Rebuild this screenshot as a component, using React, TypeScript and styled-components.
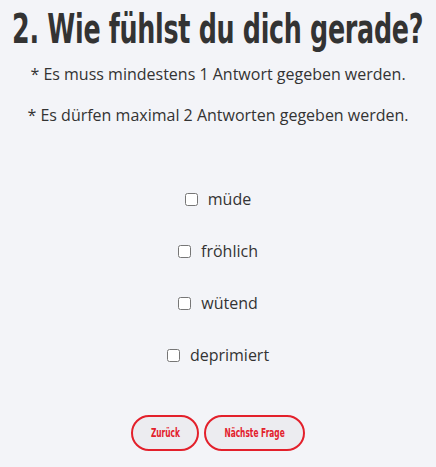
import styled, { createGlobalStyle } from "styled-components";

const Global = createGlobalStyle`
  html, body {
    margin: 0;
    padding: 0;
    background: #f3f4f8;
  }
  body {
    font-family: "Open Sans", "Liberation Sans", sans-serif;
    color: #333;
  }
`;

const Page = styled.div`
  width: 436px;
  height: 467px;
  overflow: hidden;
  display: flex;
  flex-direction: column;
  align-items: center;
`;

const Title = styled.h1`
  margin: 5px 0 0;
  font-family: "DejaVu Sans", sans-serif;
  font-weight: 700;
  font-size: 40px;
  line-height: 48px;
  letter-spacing: -0.5px;
  color: #333;
  white-space: nowrap;
  transform: scaleX(0.635);
`;

const Note = styled.p`
  margin: ${(p: { $top: number }) => p.$top}px 0 0;
  font-size: 16px;
  line-height: 22px;
  color: #333;
`;

const Options = styled.div`
  margin-top: 62px;
  display: flex;
  flex-direction: column;
  align-items: center;
  gap: 30px;
`;

const Option = styled.label`
  display: flex;
  align-items: center;
  gap: 10px;
  font-size: 16px;
  line-height: 22px;
  color: #333;
`;

const Box = styled.input`
  margin: 0;
  width: 13px;
  height: 13px;
`;

const Buttons = styled.div`
  margin-top: 49px;
  display: flex;
  gap: 5px;
`;

const Button = styled.button<{ $w: number }>`
  width: ${(p) => p.$w}px;
  height: 36px;
  padding: 0;
  border: 2px solid #e3202b;
  border-radius: 18px;
  background: #ececf0;
  color: #e3202b;
  font-family: "DejaVu Sans", sans-serif;
  font-weight: 700;
  font-size: 12px;
  cursor: pointer;
  display: flex;
  align-items: center;
  justify-content: center;
  white-space: nowrap;
`;

const ButtonLabel = styled.span`
  display: inline-block;
  transform: scaleX(0.62);
`;

const answers = ["müde", "fröhlich", "wütend", "deprimiert"];

export default function App() {
  return (
    <Page>
      <Global />
      <Title>2. Wie fühlst du dich gerade?</Title>
      <Note $top={10}>* Es muss mindestens 1 Antwort gegeben werden.</Note>
      <Note $top={19}>* Es dürfen maximal 2 Antworten gegeben werden.</Note>
      <Options>
        {answers.map((a) => (
          <Option key={a}>
            <Box type="checkbox" />
            {a}
          </Option>
        ))}
      </Options>
      <Buttons>
        <Button $w={68}>
          <ButtonLabel>Zurück</ButtonLabel>
        </Button>
        <Button $w={101}>
          <ButtonLabel>Nächste Frage</ButtonLabel>
        </Button>
      </Buttons>
    </Page>
  );
}
